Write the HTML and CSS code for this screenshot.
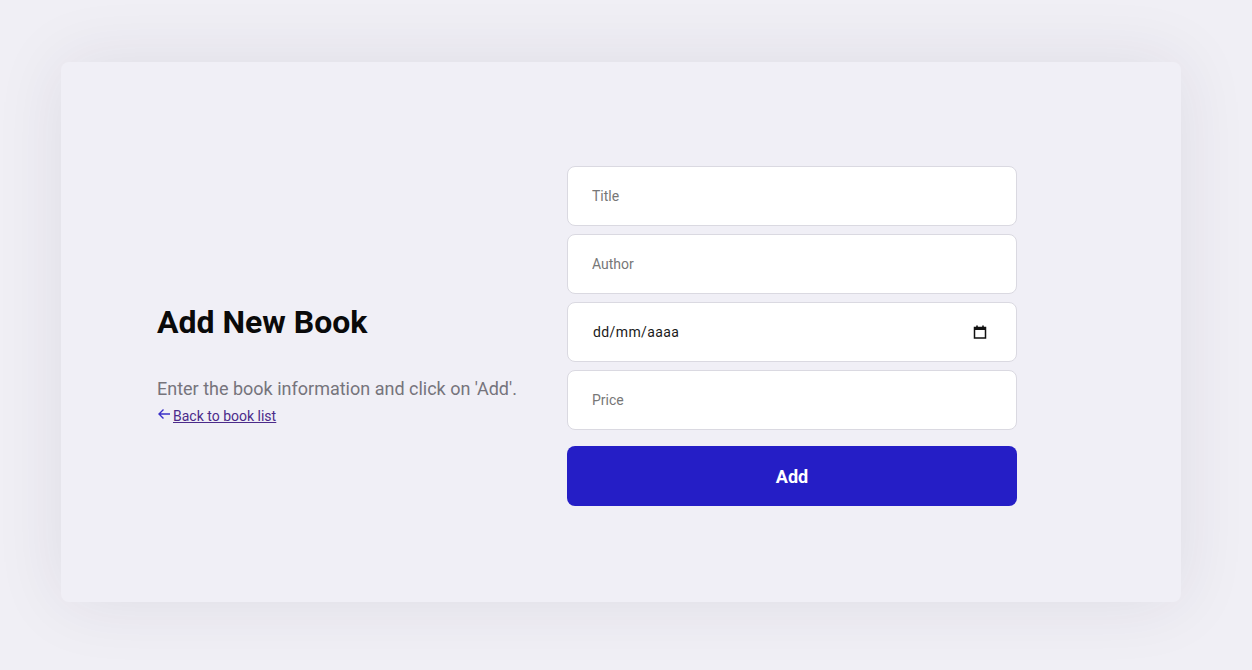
FILE: index.html
```html
<!DOCTYPE html>
<html lang="pt-BR">
<head>
<meta charset="utf-8">
<title>Add New Book</title>
<link rel="stylesheet" href="styles.css">
</head>
<body>
<main class="page">
  <section class="card">
    <div class="intro">
      <h1 class="title">Add New Book</h1>
      <p class="lead">Enter the book information and click on 'Add'.</p>
      <a class="back" href="#"><svg class="back-icon" width="14" height="12" viewBox="0 0 14 12"><path d="M13 6H2M6.5 1.5L2 6l4.5 4.5" fill="none" stroke="currentColor" stroke-width="1.4"/></svg><span class="back-text">Back to book list</span></a>
    </div>
    <form class="form">
      <input class="field" type="text" placeholder="Title">
      <input class="field" type="text" placeholder="Author">
      <div class="field date-field">
        <span class="date-text">dd/mm/aaaa</span>
        <svg class="cal" width="16" height="16" viewBox="0 0 16 16"><path d="M2.5 3.5h11v10.5h-11z" fill="none" stroke="#111" stroke-width="1.5"/><rect x="2" y="3" width="12" height="3" fill="#111"/><rect x="4.2" y="1.5" width="1.6" height="2.5" fill="#111"/><rect x="10.2" y="1.5" width="1.6" height="2.5" fill="#111"/></svg>
      </div>
      <input class="field" type="text" placeholder="Price">
      <button class="submit" type="button">Add</button>
    </form>
  </section>
</main>
</body>
</html>
```

FILE: styles.css
```css
* { box-sizing: border-box; }
html, body { margin: 0; padding: 0; }
body {
  background: #f0eff5;
  font-family: Roboto, "Liberation Sans", Arial, sans-serif;
  width: 1252px;
  height: 670px;
  overflow: hidden;
}
.page {
  padding: 62px 0 0 61px;
}
.card {
  width: 1120px;
  height: 540px;
  background: #f0eff6;
  border-radius: 8px;
  box-shadow: 0 0 70px rgba(40, 35, 70, 0.09);
  display: flex;
  align-items: center;
  padding-left: 96px;
}
.intro {
  width: 410px;
  padding-top: 62px;
}
.title {
  margin: 0;
  font-size: 32px;
  font-weight: 700;
  color: #0a0a0a;
  line-height: 40px;
}
.lead {
  margin: 35px 0 0 0;
  font-size: 18px;
  color: #76747c;
  line-height: 24px;
}
.back {
  display: inline-flex;
  align-items: flex-start;
  margin-top: 6px;
  color: #4b2a8a;
  font-size: 14px;
  line-height: 18px;
}
.back-icon {
  color: #3a30c8;
  margin-top: 1px;
  margin-right: 2px;
}
.back-text { text-decoration: underline; }
.form {
  width: 450px;
  display: flex;
  flex-direction: column;
  gap: 8px;
  margin-top: 8px;
}
.field {
  height: 60px;
  width: 100%;
  background: #ffffff;
  border: 1px solid #dad9e1;
  border-radius: 8px;
  padding: 0 24px;
  font-family: Roboto, "Liberation Sans", Arial, sans-serif;
  font-size: 14px;
  color: #222;
  outline: none;
}
.field::placeholder { color: #777; }
.date-field {
  display: flex;
  align-items: center;
  justify-content: space-between;
  padding: 0 28px 0 25px;
}
.date-text {
  font-size: 14px;
  color: #1a1a1a;
  letter-spacing: 0.4px;
}
.submit {
  margin-top: 8px;
  height: 60px;
  width: 100%;
  border: none;
  border-radius: 8px;
  background: #251ec6;
  color: #ffffff;
  font-family: Roboto, "Liberation Sans", Arial, sans-serif;
  font-size: 18px;
  font-weight: 700;
}
```
